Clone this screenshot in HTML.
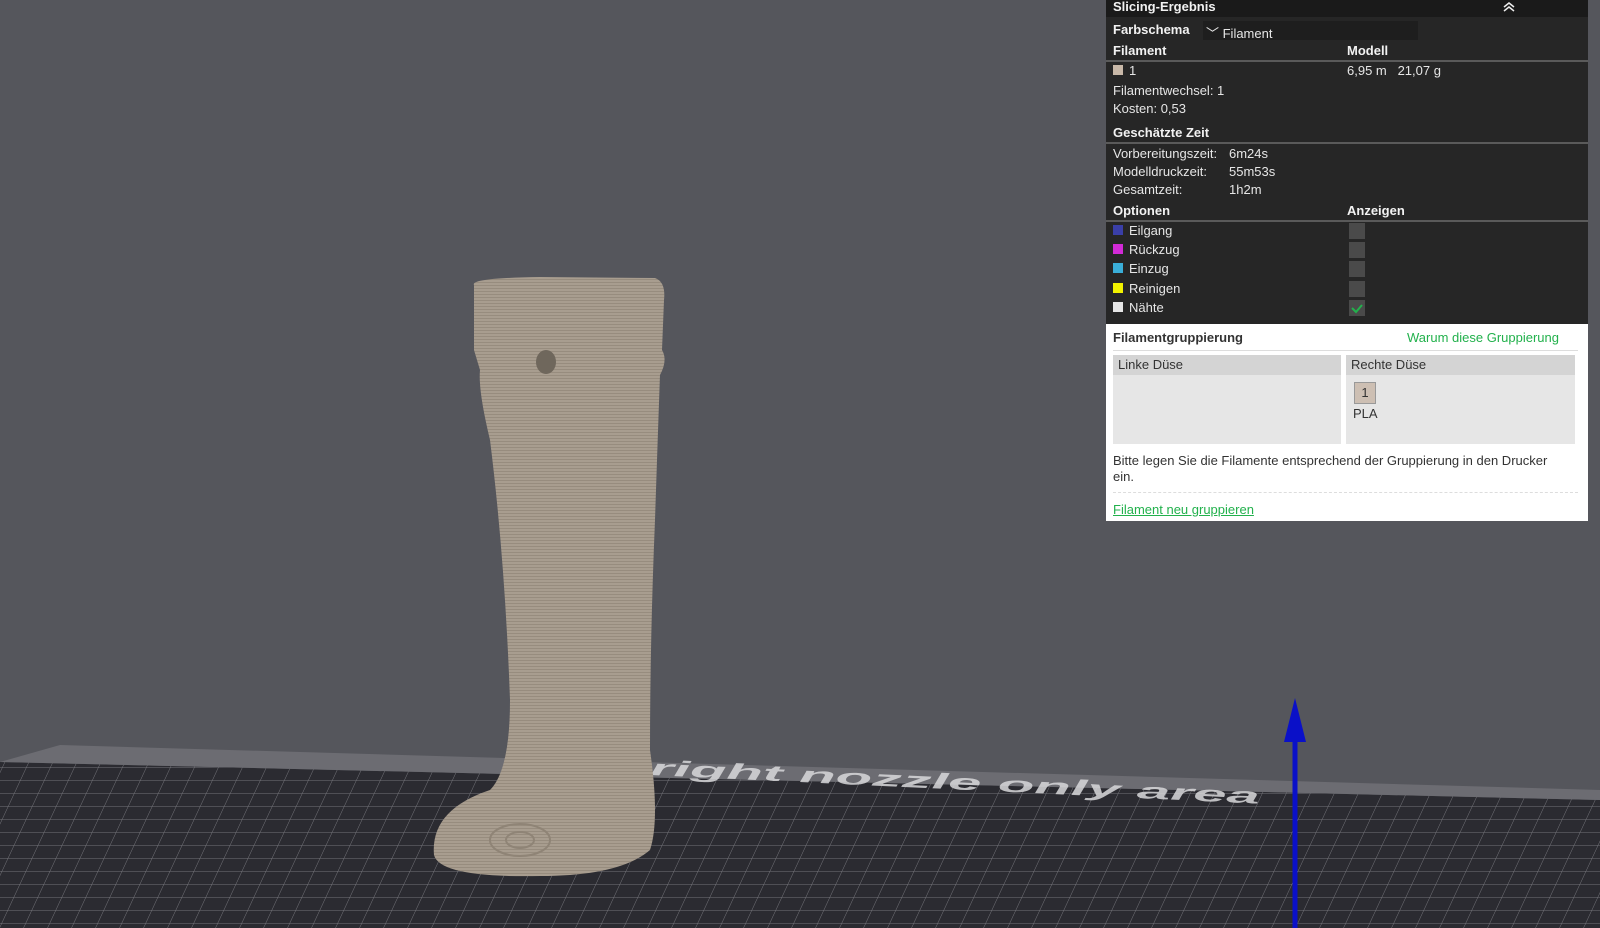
<!DOCTYPE html>
<html><head><meta charset="utf-8"><style>
body{margin:0;width:1600px;height:928px;overflow:hidden;background:#55565c;font-family:"Liberation Sans","DejaVu Sans",sans-serif;position:relative}
.p{position:absolute;left:1106px;top:0;width:482px;height:324px;background:#262626;color:#e6e6e6;font-size:13px}
.t{position:absolute;white-space:nowrap}
.b{font-weight:bold;color:#f2f2f2}
.ln{position:absolute;left:0;width:482px;height:2px;background:#5a5a5a}
.sw{position:absolute;width:10px;height:10px}
.cb{position:absolute;left:243px;width:16px;height:16px;background:#4a4a4a}
.w{position:absolute;left:1106px;top:324px;width:482px;height:197px;background:#fff;color:#333;font-size:13px}
.g{color:#22b14c}
</style></head><body>
<svg width="1600" height="928" style="position:absolute;left:0;top:0">
<defs><pattern id="gr" width="24" height="13" patternUnits="userSpaceOnUse" patternTransform="skewX(-25)"><rect width="24" height="13" fill="#2b2b31"/><path d="M0 0H24M0 0V13" stroke="#77777d" stroke-width="1"/></pattern>
<pattern id="st" width="4" height="3" patternUnits="userSpaceOnUse"><rect width="4" height="3" fill="#a89d8f"/><rect width="4" height="1" fill="#978c7e"/></pattern></defs>
<polygon points="0,762 1600,800 1600,928 0,928" fill="url(#gr)"/>
<polygon points="0,762 60,745 1600,790 1600,800" fill="#6c6c72"/>
<text x="650" y="775" fill="#d8d8da" fill-opacity="0.85" font-size="22" font-weight="bold" font-style="italic" textLength="610" lengthAdjust="spacingAndGlyphs" transform="rotate(2.7 650 775)">right nozzle only area</text>
<path d="M474 285 Q470 278 540 277 L655 278 Q666 282 664 300 L662 350 Q668 360 660 375 Q658 430 655 520 Q650 640 650 750 Q660 820 650 850 Q620 876 540 876 Q440 878 434 855 Q430 810 490 790 Q510 770 510 700 Q505 560 490 440 Q478 390 480 370 L474 350 Z" fill="url(#st)"/>
<ellipse cx="546" cy="362" rx="10" ry="12" fill="#6f675c"/>
<ellipse cx="520" cy="840" rx="30" ry="16" fill="none" stroke="#8f8476" stroke-width="2"/>
<ellipse cx="520" cy="840" rx="14" ry="8" fill="none" stroke="#8f8476" stroke-width="2"/>
<line x1="1295" y1="730" x2="1295" y2="928" stroke="#0a10c8" stroke-width="5"/>
<polygon points="1295,698 1284,742 1306,742" fill="#0a10c8"/>
</svg>
<div class="p">
<div style="position:absolute;left:0;top:0;width:482px;height:17px;background:#1a1a1a"></div>
<div class="t b" style="left:7px;top:-1px;font-size:13px">Slicing-Ergebnis</div>
<svg style="position:absolute;left:396px;top:1px" width="14" height="12"><path d="M2 6 L7 2 L12 6 M2 10 L7 6 L12 10" stroke="#eee" stroke-width="1.5" fill="none"/></svg>
<div class="t b" style="left:7px;top:22px">Farbschema</div>
<div style="position:absolute;left:97px;top:21px;width:215px;height:19px;background:#1e1e1e"></div>
<div class="t" style="left:100px;top:23px">﹀ Filament</div>
<div class="t b" style="left:7px;top:43px">Filament</div><div class="t b" style="left:241px;top:43px">Modell</div>
<div class="ln" style="top:60px"></div>
<div class="sw" style="left:7px;top:65px;background:#c8b8a8"></div>
<div class="t" style="left:23px;top:63px">1</div><div class="t" style="left:241px;top:63px">6,95 m&nbsp;&nbsp;&nbsp;21,07 g</div>
<div class="t" style="left:7px;top:83px">Filamentwechsel: 1</div>
<div class="t" style="left:7px;top:101px">Kosten: 0,53</div>
<div class="t b" style="left:7px;top:125px">Geschätzte Zeit</div>
<div class="ln" style="top:142px"></div>
<div class="t" style="left:7px;top:146px">Vorbereitungszeit:</div><div class="t" style="left:123px;top:146px">6m24s</div>
<div class="t" style="left:7px;top:164px">Modelldruckzeit:</div><div class="t" style="left:123px;top:164px">55m53s</div>
<div class="t" style="left:7px;top:182px">Gesamtzeit:</div><div class="t" style="left:123px;top:182px">1h2m</div>
<div class="t b" style="left:7px;top:203px">Optionen</div><div class="t b" style="left:241px;top:203px">Anzeigen</div>
<div class="ln" style="top:220px"></div>
<div class="sw" style="left:7px;top:225px;background:#3a3fa8"></div><div class="t" style="left:23px;top:223px">Eilgang</div><div class="cb" style="top:223px"></div>
<div class="sw" style="left:7px;top:244px;background:#d22ad6"></div><div class="t" style="left:23px;top:242px">Rückzug</div><div class="cb" style="top:242px"></div>
<div class="sw" style="left:7px;top:263px;background:#3aaed8"></div><div class="t" style="left:23px;top:261px">Einzug</div><div class="cb" style="top:261px"></div>
<div class="sw" style="left:7px;top:283px;background:#f2f200"></div><div class="t" style="left:23px;top:281px">Reinigen</div><div class="cb" style="top:281px"></div>
<div class="sw" style="left:7px;top:302px;background:#e6e6e6"></div><div class="t" style="left:23px;top:300px">Nähte</div><div class="cb" style="top:300px"><svg width="16" height="16"><path d="M3 8 L7 12 L13 5" stroke="#22b14c" stroke-width="2" fill="none"/></svg></div>
</div>
<div class="w">
<div class="t b" style="left:7px;top:6px;color:#333">Filamentgruppierung</div>
<div class="t g" style="left:301px;top:6px">Warum diese Gruppierung</div>
<div style="position:absolute;left:7px;top:26px;width:465px;height:1px;background:#ddd"></div>
<div style="position:absolute;left:7px;top:31px;width:228px;height:89px;background:#e6e6e6"><div style="height:20px;background:#d4d4d4;padding-left:5px;line-height:20px">Linke Düse</div></div>
<div style="position:absolute;left:240px;top:31px;width:229px;height:89px;background:#e6e6e6"><div style="height:20px;background:#d4d4d4;padding-left:5px;line-height:20px">Rechte Düse</div>
<div style="position:absolute;left:8px;top:27px;width:20px;height:20px;background:#cdbfb3;border:1px solid #999;text-align:center;line-height:20px">1</div>
<div style="position:absolute;left:7px;top:51px">PLA</div></div>
<div class="t" style="left:7px;top:129px">Bitte legen Sie die Filamente entsprechend der Gruppierung in den Drucker</div>
<div class="t" style="left:7px;top:145px">ein.</div>
<div style="position:absolute;left:7px;top:168px;width:465px;border-top:1px dashed #ddd"></div>
<div class="t g" style="left:7px;top:178px;text-decoration:underline">Filament neu gruppieren</div>
</div>
</body></html>
